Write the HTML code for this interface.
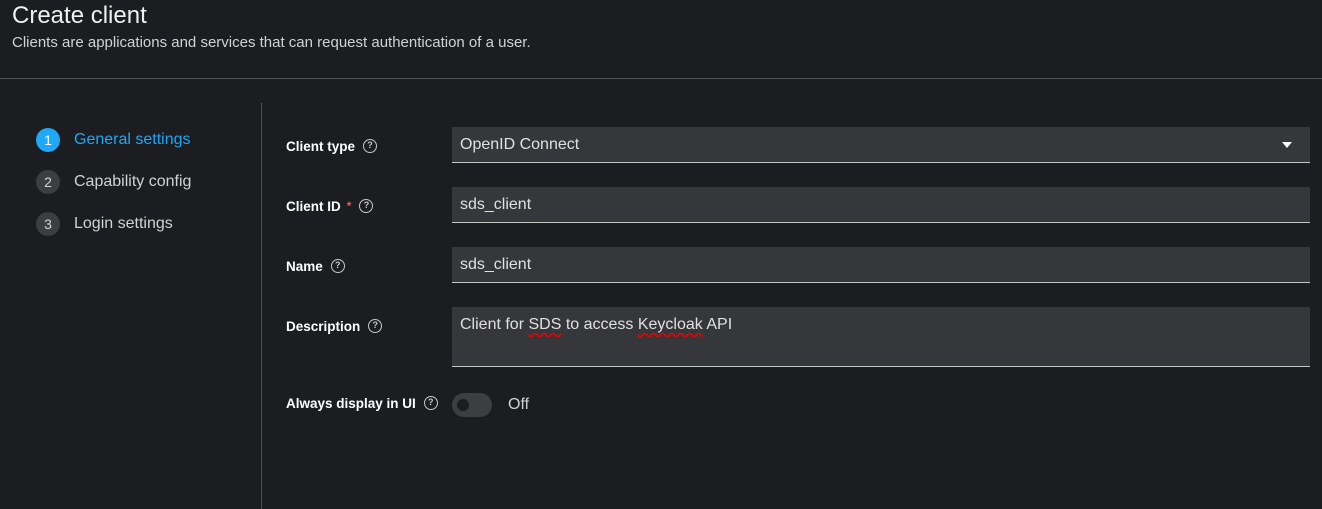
<!DOCTYPE html>
<html><head><style>
*{box-sizing:border-box;margin:0;padding:0}
body{width:1322px;height:509px;background:#1b1d21;font-family:"Liberation Sans",sans-serif;color:#e0e0e0;position:relative;overflow:hidden}
.a{position:absolute;white-space:nowrap}
.inp{position:absolute;left:452px;width:858px;background:#36373b;border-bottom:1px solid #c7c7c7;font-size:16px;color:#e0e0e0;padding-left:8px;line-height:36px}
.lbl{position:absolute;left:286px;font-size:13.5px;font-weight:bold;color:#fff;height:18px;display:flex;align-items:center;white-space:nowrap}
.q{display:inline-block;width:14px;height:14px;border:1.5px solid #c7c7c7;border-radius:50%;font-size:9px;line-height:11px;text-align:center;color:#c7c7c7;font-weight:bold;margin-left:8px;flex:none}
.step{position:absolute;left:36px;width:24px;height:24px;border-radius:50%;background:#3c3f42;color:#d2d2d2;font-size:14px;text-align:center;line-height:24px}
.st{position:absolute;left:74px;font-size:16px;color:#d2d2d2}
</style></head><body>
<div class="a" style="left:12px;top:2px;font-size:24px;color:#f0f0f0">Create client</div>
<div class="a" style="left:12px;top:34px;font-size:15px;color:#d2d2d2">Clients are applications and services that can request authentication of a user.</div>
<div class="a" style="left:0;top:78px;width:1322px;height:1px;background:#4f5255"></div>
<div class="a" style="left:261px;top:103px;width:1px;height:406px;background:#4f5255"></div>
<div class="step" style="top:128px;background:#1fa7f8;color:#fff">1</div>
<div class="st" style="top:131px;color:#1fa7f8">General settings</div>
<div class="step" style="top:170px">2</div>
<div class="st" style="top:173px">Capability config</div>
<div class="step" style="top:212px">3</div>
<div class="st" style="top:215px">Login settings</div>

<div class="lbl" style="top:137px">Client type<span class="q">?</span></div>
<div class="inp" style="top:127px;height:36px">OpenID Connect<span style="position:absolute;right:18px;top:15px;width:0;height:0;border-left:5px solid transparent;border-right:5px solid transparent;border-top:6px solid #fff"></span></div>
<div class="lbl" style="top:197px">Client ID <span style="color:#f0565b;margin-left:6px;font-size:12px">*</span><span class="q">?</span></div>
<div class="inp" style="top:187px;height:36px">sds_client</div>
<div class="lbl" style="top:257px">Name<span class="q">?</span></div>
<div class="inp" style="top:247px;height:36px">sds_client</div>
<div class="lbl" style="top:317px">Description<span class="q">?</span></div>
<div class="inp" style="top:307px;height:60px;line-height:36px">Client for <span style="text-decoration:underline wavy #e00;text-underline-offset:3px">SDS</span> to access <span style="text-decoration:underline wavy #e00;text-underline-offset:3px">Keycloak</span> API</div>
<div class="lbl" style="top:394px">Always display in UI<span class="q">?</span></div>
<div class="a" style="left:452px;top:393px;width:40px;height:24px;border-radius:12px;background:#3c3f42"><div style="position:absolute;left:5px;top:6px;width:12px;height:12px;border-radius:50%;background:#1b1d21"></div></div>
<div class="a" style="left:508px;top:396px;font-size:16px;color:#d2d2d2">Off</div>
</body></html>
